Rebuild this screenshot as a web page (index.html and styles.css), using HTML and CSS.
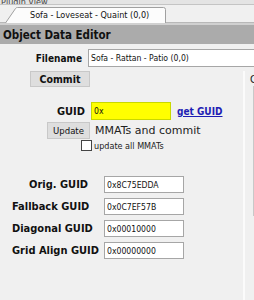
FILE: index.html
```html
<!DOCTYPE html>
<html lang="en">
<head>
  <meta charset="UTF-8" />
  <title>Object Data Editor</title>
  <link rel="stylesheet" href="styles.css">
</head>
<body>
  <div class="plugin-bar">Plugin View</div>

  <div class="tab-strip">
    <div class="tab">
      <svg class="tab-shape" width="162" height="16" viewBox="0 0 162 16">
        <path d="M0.5 16 L10.5 1.5 Q11 0.5 12.5 0.5 L158.5 0.5 Q160.5 0.5 160.5 2.5 L160.5 16" fill="#fcfcfc" stroke="#a0a0a0" stroke-width="1"/>
      </svg>
      <span class="tab-title">Sofa - Loveseat - Quaint (0,0)</span>
    </div>
  </div>

  <div class="panel-title">Object Data Editor</div>

  <div class="file-row">
    <label class="lbl file-lbl">Filename</label>
    <input class="field file-field" type="text" value="Sofa - Rattan - Patio (0,0)">
  </div>

  <div class="editor">
    <div class="form">
      <button class="btn commit">Commit</button>

      <div class="guid-row">
        <label class="lbl guid-lbl">GUID</label>
        <input class="field guid-field" type="text" value="0x">
        <a class="get-guid" href="#">get GUID</a>
      </div>

      <div class="update-row">
        <button class="btn update">Update</button>
        <span class="update-text">MMATs and commit</span>
      </div>

      <div class="check-row">
        <span class="check"></span>
        <span class="check-text">update all MMATs</span>
      </div>

      <div class="guid-list">
        <label class="lbl orig">Orig. GUID</label>
        <input class="field small" type="text" value="0x8C75EDDA">
        <label class="lbl">Fallback GUID</label>
        <input class="field small" type="text" value="0x0C7EF57B">
        <label class="lbl">Diagonal GUID</label>
        <input class="field small" type="text" value="0x00010000">
        <label class="lbl">Grid Align GUID</label>
        <input class="field small" type="text" value="0x00000000">
      </div>
    </div>

    <div class="side">
      <div class="side-caption">C</div>
      <div class="side-box"></div>
    </div>
  </div>
</body>
</html>
```

FILE: styles.css
```css
* {
  margin: 0;
  padding: 0;
  box-sizing: border-box;
}

body {
  background-color: #f0f0f0;
  color: #000;
  font-family: "DejaVu Sans Condensed", "DejaVu Sans", sans-serif;
  font-size: 11px;
  width: 254px;
  height: 300px;
  overflow: hidden;
}

.plugin-bar {
  height: 4px;
  overflow: hidden;
  line-height: 4px;
  padding-left: 1px;
  font-size: 9px;
  color: #444;
  background-color: #e4e4e4;
  white-space: nowrap;
}

.tab-strip {
  height: 19px;
  border-top: 1px solid #c4c4c4;
  border-bottom: 1px solid #b8b8b8;
  background-color: #f0f0f0;
  padding: 2px 0 0 5px;
}

.tab {
  position: relative;
  width: 162px;
  height: 15px;
}

.tab-shape {
  position: absolute;
  left: 0;
  top: 0;
}

.tab-title {
  position: relative;
  display: block;
  padding: 2px 0 0 25px;
  font-size: 9px;
  line-height: 12px;
  color: #111;
  white-space: nowrap;
}

.panel-title {
  height: 21px;
  border-top: 2px solid #d0d0d0;
  background-color: #ababab;
  padding: 2px 0 0 3px;
  font-weight: bold;
  font-size: 11.5px;
  line-height: 16px;
  color: #111;
  white-space: nowrap;
}

.lbl {
  font-weight: bold;
  font-size: 11px;
  color: #111;
  white-space: nowrap;
}

.field {
  height: 18px;
  border: 1px solid #a6a6a6;
  background-color: #fff;
  font-family: "DejaVu Sans Condensed", "DejaVu Sans", sans-serif;
  font-size: 8.6px;
  padding: 0 2px;
  color: #111;
  outline: none;
}

.file-row {
  display: flex;
  align-items: center;
  gap: 6px;
  margin-top: 5px;
}

.file-lbl {
  flex: none;
  width: 82px;
  text-align: right;
  font-size: 10px;
}

/* runs on past the window edge, so no right border */
.file-field {
  width: 166px;
  flex: none;
  border-right: none;
}

.editor {
  display: flex;
  margin-top: 4px;
}

.form {
  width: 243px;
  flex: none;
}

.btn {
  display: block;
  height: 16px;
  border: 1px solid #c8c8c8;
  background-color: #dedede;
  font-family: "DejaVu Sans Condensed", "DejaVu Sans", sans-serif;
  font-size: 10.5px;
  color: #111;
}

.commit {
  width: 60px;
  margin-left: 30px;
  font-weight: bold;
}

.guid-row {
  display: flex;
  align-items: center;
  margin-top: 15px;
}

.guid-lbl {
  flex: none;
  width: 85px;
  text-align: right;
}

.guid-field {
  flex: none;
  width: 80px;
  margin-left: 6px;
  background-color: #ffff00;
  border-color: #c9d800;
}

.get-guid {
  margin-left: 6px;
  font-weight: bold;
  font-size: 10px;
  color: #1e1eb4;
  text-decoration: underline;
}

.update-row {
  display: flex;
  align-items: center;
  margin-top: 2px;
}

.update {
  width: 43px;
  height: 17px;
  margin-left: 47px;
  font-size: 9.5px;
}

.update-text {
  margin-left: 5px;
  font-family: "DejaVu Sans", sans-serif;
  font-size: 11px;
  color: #222;
}

.check-row {
  display: flex;
  align-items: center;
  margin-top: 1px;
  padding-left: 81px;
}

.check {
  width: 11px;
  height: 11px;
  border: 1px solid #444;
  background-color: #fff;
}

.check-text {
  margin-left: 2px;
  font-size: 9px;
  color: #222;
}

.guid-list {
  display: grid;
  grid-template-columns: 104px 80px;
  row-gap: 5px;
  align-items: center;
  margin-top: 25px;
}

.guid-list .lbl {
  padding-left: 12px;
}

.guid-list .orig {
  padding-left: 29px;
}

.small {
  height: 17px;
}

.side {
  flex: 1;
  border-left: 2px solid #fbfbfb;
  height: 230px;
}

.side-caption {
  padding: 2px 0 0 5px;
  font-size: 11px;
  line-height: 13px;
  color: #222;
  overflow: hidden;
}

.side-box {
  margin-left: 8px;
  height: 130px;
  border-left: 1px solid #c8c8c8;
}
```
